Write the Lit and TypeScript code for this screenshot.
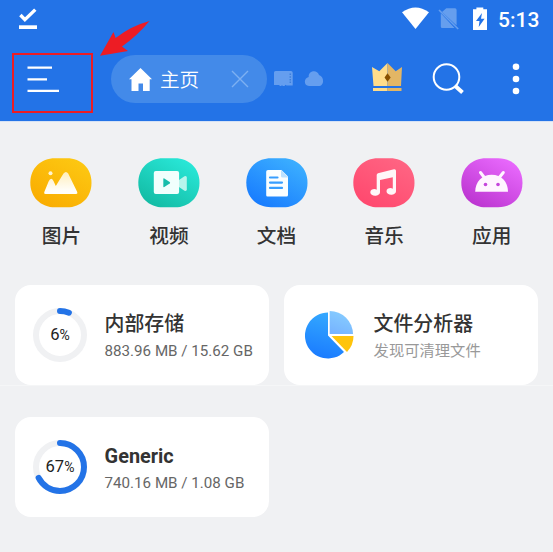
import { LitElement, html, svg, css, TemplateResult, SVGTemplateResult } from "lit";
import { customElement, property } from "lit/decorators.js";

const FONT = css`Roboto, "Noto Sans CJK SC", sans-serif`;

@customElement("status-bar")
class StatusBar extends LitElement {
  static styles = css`
    :host { display: flex; height: 37px; align-items: flex-start; color: #fff; }
    svg { display: block; flex: none; }
    .check { margin: 7px 0 0 18px; }
    .system { margin: 6px 0 0 auto; }
    .clock { font: 500 21px/26px ${FONT}; width: 65px; margin-top: 7px; padding-left: 10px; box-sizing: border-box; white-space: nowrap; }
  `;
  render() {
    return html`
      <svg class="check" width="21" height="24" viewBox="0 0 21 24">
        <path d="M2.400 8 L6.900 12.700 L17.300 2.600" fill="none" stroke="#fff" stroke-width="3.400" />
        <rect x="1" y="18.300" width="18" height="3.700" fill="#fff" />
      </svg>
      <svg class="system" width="88" height="26" viewBox="400 6 88 26">
        <path d="M402 12.200 Q415.500 2.600 429 12.200 L415.500 29 Z" fill="#fff" />
        <path d="M442 12 L446.300 8.300 H455 Q456.600 8.300 456.600 10 V25.500 Z M440.800 13.300 L454.500 28 H442.300 Q440.800 28 440.800 26.500 Z" fill="#659eee" />
        <path d="M439 10 L458.200 29" stroke="#659eee" stroke-width="1.600" />
        <path d="M473 9.200 H476.400 V7.400 H483.300 V9.200 H487 V30 H473 Z" fill="#fff" />
        <path d="M482 13 L476 21 H479.500 L478.700 27 L484.600 18.700 H481 Z" fill="#2373e7" />
      </svg>
      <div class="clock">5:13</div>
    `;
  }
}

@customElement("tool-bar")
class ToolBar extends LitElement {
  static styles = css`
    :host { display: flex; height: 84px; align-items: center; position: relative; box-sizing: border-box; }
    svg { display: block; flex: none; }
    .menu { margin-left: 12px; box-sizing: border-box; width: 81px; height: 60px; border: 2px solid #ed1c24; margin-top: 7px; padding: 11px 0 0 13px; }
    .tab { display: flex; align-items: center; box-sizing: border-box; width: 156px; height: 47.500px; border-radius: 24px; background: #438ae9; margin-left: 18px; padding: 0 17px; }
    .name { color: #fff; font: 350 19.600px/28px ${FONT}; margin: 3px auto 0 7px; }
    .mini { margin-left: 6px; }
    .crown { margin: 0 0 4px 46px; }
    .search { margin-left: 28px; }
    .more { margin: 0 33px 0 auto; }
    .arrow { position: absolute; left: 98px; top: -19px; }
  `;
  render() {
    return html`
      <div class="menu">
        <svg width="34" height="28" viewBox="0 0 34 28">
          <path d="M0.500 1.700 H25 M0.500 13.300 H20 M0.500 24.800 H32" stroke="#fff" stroke-width="2.300" />
        </svg>
      </div>
      <div class="tab">
        <svg width="25" height="25" viewBox="128 66 25 25">
          <path d="M140.500 67 L152 78.300 H149.700 V90 H143 V82.500 H138.500 V90 H131.500 V78.300 H129 Z" fill="#fff" />
        </svg>
        <span class="name">主页</span>
        <svg width="20" height="20" viewBox="0 0 20 20">
          <path d="M2 2 L18 18 M18 2 L2 18" stroke="#7db0f2" stroke-width="1.400" />
        </svg>
      </div>
      <svg class="mini" width="52" height="18" viewBox="273 70 52 18">
        <path d="M275.500 71 H291 Q292.700 71 292.700 72.700 V85.500 H286.500 L285.500 84.800 L284.500 86 H283 L282 85.300 L281 86 H280 L279 85 H274 V72.500 Q274 71 275.500 71 Z" fill="#659eef" />
        <path d="M290.300 73.500 V83.500" stroke="#3c7fdd" stroke-width="1.500" stroke-dasharray="1.500 1.200" />
        <path d="M309 86 C303.500 86 303.500 78 308.700 77 C308 71 317 68.800 319 75 C324.500 76.500 324.500 86 318.500 86 Z" fill="#659eef" />
      </svg>
      <svg class="crown" width="32" height="30" viewBox="371 62 32 30">
        <path d="M372 67 L379.300 71.300 L387.500 63 V86 H373.500 Z" fill="#ffdc8b" />
        <path d="M402 67 L395.700 71.300 L387.500 63 V86 H401 Z" fill="#e3b665" />
        <path d="M373 88 H387.500 V91 H373 Z" fill="#ffdc8b" />
        <path d="M387.500 88 H401.500 V91 H387.500 Z" fill="#e3b665" />
        <path d="M387.500 73.300 L390.700 77.500 L387.500 81.800 L384.500 77.500 Z" fill="#885000" />
      </svg>
      <svg class="search" width="34" height="34" viewBox="431 62 34 34">
        <circle cx="446.500" cy="77" r="12.800" fill="none" stroke="#fff" stroke-width="2" />
        <path d="M455 85.700 L462.500 92.500" stroke="#fff" stroke-width="4" />
      </svg>
      <svg class="more" width="8" height="32" viewBox="512 63 8 32">
        <circle cx="516" cy="66.700" r="3.300" fill="#fff" />
        <circle cx="516" cy="79" r="3.300" fill="#fff" />
        <circle cx="516" cy="91" r="3.300" fill="#fff" />
      </svg>
      <svg class="arrow" width="54" height="40" viewBox="98 18 54 40">
        <path d="M100 55.700 L113.500 32 L115.600 38 Q131 26 149.500 21 Q137.500 35.500 122 46.500 L128 51 Z" fill="#ed1c24" />
      </svg>
    `;
  }
}

interface Category { label: string; from: string; to: string; glyph: SVGTemplateResult; }

const categories: Category[] = [
  {
    label: "图片", from: "#f9ab00", to: "#fdc913",
    glyph: svg`
      <defs><linearGradient id="m" x1="0" y1="0" x2="0" y2="1"><stop offset="0" stop-color="#ffeebb"/><stop offset="0.850" stop-color="#fffefa"/></linearGradient></defs>
      <circle cx="20.500" cy="15.200" r="2" fill="#fff4d0"/>
      <path d="M15.500 36 Q13.500 36 14.500 33.500 L18.600 23.500 Q21 18.500 23.500 23 L25.800 28 L33.500 15.500 Q36 12.300 38.200 15.500 L47 33.500 Q48 36 46 36 Z" fill="url(#m)"/>`,
  },
  {
    label: "视频", from: "#12b9a1", to: "#2aeadb",
    glyph: svg`
      <path d="M41 22 L46.500 18.200 Q48.800 17.300 48.800 19.500 V31.500 Q48.800 33.500 46.500 32.800 L41 29 Z" fill="#b8f5ec"/>
      <rect x="15.800" y="13" width="25.300" height="23" rx="2" fill="#f1fffd"/>
      <path d="M25.300 21 Q25.300 20 26.300 20.500 L31.700 24 Q32.600 24.900 31.700 25.600 L26.300 29 Q25.300 29.500 25.300 28.500 Z" fill="#18bdab"/>`,
  },
  {
    label: "文档", from: "#1679fe", to: "#3eb2ff",
    glyph: svg`
      <path d="M22 12 H35.500 L42 18.500 V37 Q42 38.500 40.500 38.500 H21.500 Q20.200 38.500 20.200 37 V13.700 Q20.200 12 22 12 Z" fill="#fafeff"/>
      <path d="M35 11.800 L42.200 19.500 H36.500 Q35 19.500 35 18 Z" fill="#bce1ff"/>
      <path d="M24 19.500 H31.500 M24 24.600 H36 M24 29.900 H36" stroke="#379eff" stroke-width="2.200" stroke-linecap="round"/>`,
  },
  {
    label: "音乐", from: "#ff476d", to: "#ff6684",
    glyph: svg`
      <path d="M23.700 17 Q23.700 15.600 25 15.200 L41 11.300 Q43 11 43 12.800 V33 C43 38 33.500 38 33.500 33.300 C33.500 30 38 29.500 39.800 30.700 V19.200 L27 22 V34 C27 39 17.300 39 17.300 34.300 C17.300 31 22 30.500 23.700 31.700 Z" fill="#fff6f8"/>`,
  },
  {
    label: "应用", from: "#b932ce", to: "#eb6cff",
    glyph: svg`
      <path d="M14.200 33.700 C14.200 24 21 16.800 30.700 16.800 C40.500 16.800 47 24 47 33.700 Z" fill="#fff5ff"/>
      <path d="M19.500 14.500 L23.300 19.500 M42.300 14.500 L38.300 19.500" stroke="#fff5ff" stroke-width="3" stroke-linecap="round"/>
      <circle cx="24.500" cy="26.500" r="1.800" fill="#c546dc"/><circle cx="37" cy="26.500" r="1.800" fill="#c546dc"/>`,
  },
];

@customElement("category-tile")
class CategoryTile extends LitElement {
  @property({ attribute: false }) item!: Category;
  static styles = css`
    :host { display: flex; flex-direction: column; align-items: center; }
    svg { display: block; }
    .label { color: #333; font: 500 19.700px/28px ${FONT}; margin-top: 15px; }
  `;
  render() {
    const c = this.item;
    return html`
      <svg width="62" height="50" viewBox="0 0 62 50">
        <defs><linearGradient id="g" x1="0.150" y1="1" x2="0.850" y2="0"><stop offset="0" stop-color=${c.from}/><stop offset="1" stop-color=${c.to}/></linearGradient></defs>
        <path d="M25 0.200 H37 C51 0.200 61.500 10 61.500 24.700 C61.500 39.500 51 49.300 37 49.300 H25 C11 49.300 0.300 39.500 0.300 24.700 C0.300 10 11 0.200 25 0.200 Z" fill="url(#g)"/>
        ${c.glyph}
      </svg>
      <div class="label">${c.label}</div>
    `;
  }
}

@customElement("usage-ring")
class UsageRing extends LitElement {
  @property({ type: Number }) value = 0;
  static styles = css`
    :host { display: grid; width: 54px; height: 54px; place-items: center; }
    svg, .value { grid-area: 1 / 1; }
    .value { color: #222; font: 400 16.600px/20px ${FONT}; white-space: nowrap; }
    .sign { font-size: 14px; }
  `;
  render() {
    const len = 2 * Math.PI * 24;
    const arc = (len * this.value) / 100;
    return html`
      <svg width="54" height="54" viewBox="0 0 54 54">
        <circle cx="27" cy="27" r="24" fill="none" stroke="#f0f1f3" stroke-width="6"/>
        <circle cx="27" cy="27" r="24" fill="none" stroke="#2373e7" stroke-width="6" stroke-linecap="round" stroke-dasharray="${arc} ${len}" transform="rotate(-90 27 27)"/>
      </svg>
      <div class="value">${this.value}<span class="sign">%</span></div>
    `;
  }
}

@customElement("info-card")
class InfoCard extends LitElement {
  @property() heading = "";
  @property() detail = "";
  @property({ type: Boolean, reflect: true }) muted = false;
  @property({ type: Boolean, reflect: true }) strong = false;
  static styles = css`
    :host { display: flex; align-items: center; box-sizing: border-box; height: 100px; padding-left: 18px; background: #fff; border-radius: 16px; }
    .copy { margin: 3px 0 0 17.600px; white-space: nowrap; }
    .heading { color: #333; font: 500 19.900px/28px ${FONT}; }
    :host([strong]) .heading { font-weight: 700; }
    .detail { color: #666; font: 400 15.150px/22px ${FONT}; margin-top: 1px; }
    :host([muted]) .detail { color: #999; font-size: 15.300px; }
  `;
  render() {
    return html`
      <slot></slot>
      <div class="copy">
        <div class="heading">${this.heading}</div>
        <div class="detail">${this.detail}</div>
      </div>
    `;
  }
}

@customElement("app-root")
class AppRoot extends LitElement {
  static styles = css`
    :host { display: block; height: 552px; overflow: hidden; background: #f0f1f3; }
    .header { display: block; height: 121px; background: #2373e7; border-bottom: 1px solid #d5e2f5; }
    .categories { display: grid; grid-template-columns: repeat(5, 107.550px); margin: 36px 0 0 7.700px; height: 127px; }
    .cards { display: grid; grid-template-columns: 254px 254px; gap: 0 15px; padding: 0 15px; }
    .divider { height: 1px; margin-bottom: 31px; background: #f5f6f7; }
    .pie { width: 54px; height: 54px; display: block; flex: none; }
  `;
  render(): TemplateResult {
    return html`
      <div class="header">
        <status-bar></status-bar>
        <tool-bar></tool-bar>
      </div>
      <div class="categories">
        ${categories.map((c) => html`<category-tile .item=${c}></category-tile>`)}
      </div>
      <div class="cards">
        <info-card heading="内部存储" detail="883.96 MB / 15.62 GB"><usage-ring value="6"></usage-ring></info-card>
        <info-card muted heading="文件分析器" detail="发现可清理文件">
          <svg class="pie" viewBox="302 308 54 54">
            <defs>
              <linearGradient id="a" x1="0.600" y1="0" x2="0.400" y2="1"><stop offset="0" stop-color="#34a9ff"/><stop offset="1" stop-color="#1a7bff"/></linearGradient>
              <linearGradient id="b" x1="0.700" y1="0" x2="0.300" y2="1"><stop offset="0" stop-color="#87ceff"/><stop offset="1" stop-color="#77b4ff"/></linearGradient>
            </defs>
            <path d="M328 312.500 A23 23 0 1 0 344 352 L328 335.500 Z" fill="url(#a)"/>
            <path d="M329.700 311 A23.300 23.300 0 0 1 353 334 H329.700 Z" fill="url(#b)"/>
            <path d="M331.500 336 H353.500 Q353.500 345 347 352 Z" fill="#ffc40c"/>
          </svg>
        </info-card>
      </div>
      <div class="divider"></div>
      <div class="cards">
        <info-card strong heading="Generic" detail="740.16 MB / 1.08 GB"><usage-ring value="67"></usage-ring></info-card>
      </div>
    `;
  }
}
